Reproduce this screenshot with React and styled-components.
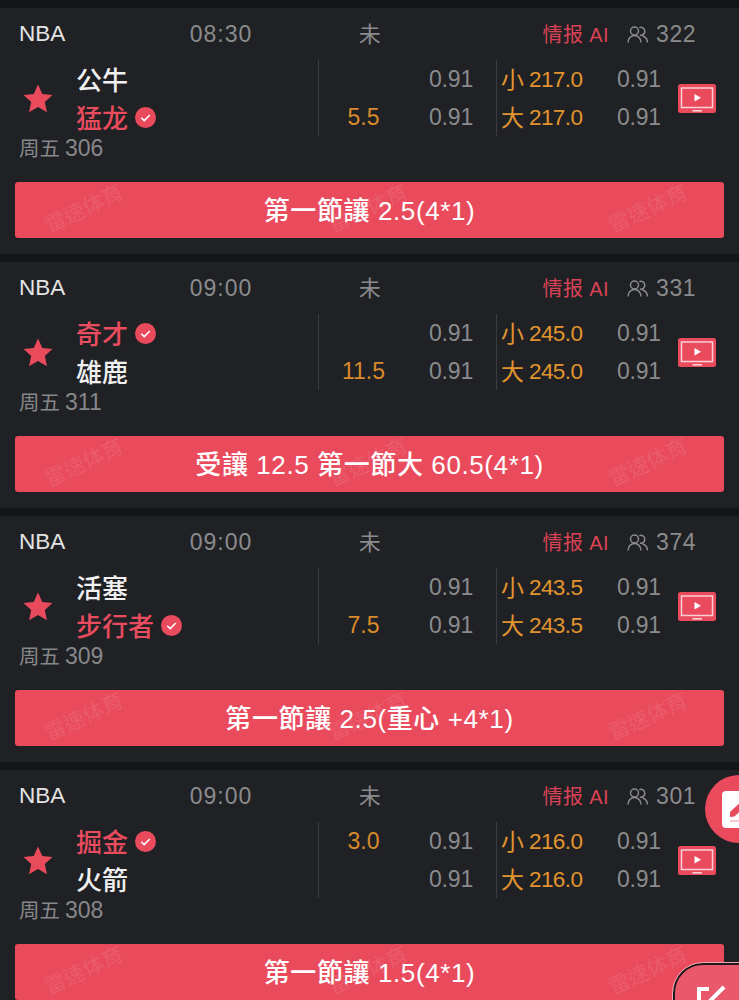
import React from "react";
import styled, { createGlobalStyle } from "styled-components";

const matches = [
  {
    time: "08:30",
    count: 322,
    teams: ["公牛", "猛龙"],
    pick: 1,
    code: "周五 306",
    line: "5.5",
    lineRow: 1,
    total: "217.0",
    tip: "第一節讓 2.5(4*1)",
  },
  {
    time: "09:00",
    count: 331,
    teams: ["奇才", "雄鹿"],
    pick: 0,
    code: "周五 311",
    line: "11.5",
    lineRow: 1,
    total: "245.0",
    tip: "受讓 12.5 第一節大 60.5(4*1)",
  },
  {
    time: "09:00",
    count: 374,
    teams: ["活塞", "步行者"],
    pick: 1,
    code: "周五 309",
    line: "7.5",
    lineRow: 1,
    total: "243.5",
    tip: "第一節讓 2.5(重心 +4*1)",
  },
  {
    time: "09:00",
    count: 301,
    teams: ["掘金", "火箭"],
    pick: 0,
    code: "周五 308",
    line: "3.0",
    lineRow: 0,
    total: "216.0",
    tip: "第一節讓 1.5(4*1)",
  },
];

const GlobalStyle = createGlobalStyle`
  html, body {
    margin: 0;
    padding: 0;
    background: #151618;
    height: 1000px;
    overflow: hidden;
  }
  * {
    box-sizing: border-box;
  }
`;

const Page = styled.div`
  position: relative;
  width: 739px;
  height: 1000px;
  overflow: hidden;
  display: flex;
  flex-direction: column;
  gap: 8px;
  padding-top: 8px;
  background: #151618;
  font-family: "Liberation Sans", "Noto Sans CJK SC", sans-serif;
`;

const Card = styled.section`
  flex: none;
  height: 246px;
  padding: 0 15px;
  background: #202124;
`;

const Header = styled.div`
  display: grid;
  grid-template-columns: 155px 94px 148px 1fr;
  align-items: center;
  height: 52px;
  padding-left: 4px;
  font-size: 23px;
  letter-spacing: 0.6px;
  color: #8a8b8d;
`;

const League = styled.span`
  font-size: 22.5px;
  letter-spacing: 0;
  color: #e4e4e5;
`;

const Time = styled.span`
  text-align: center;
  letter-spacing: 1px;
`;

const Status = styled.span`
  text-align: center;
  padding: 0 0 4px 56px;
  font-size: 22px;
`;

const Meta = styled.div`
  display: flex;
  align-items: center;
  justify-content: flex-end;
  padding-right: 26px;
`;

const Intel = styled.span`
  padding-bottom: 2px;
  margin-right: 18px;
  color: #d94256;
  font-size: 20px;
  letter-spacing: 0.4px;
`;

const Count = styled.span`
  margin-left: 8px;
  min-width: 42px;
`;

const Body = styled.div`
  display: grid;
  grid-template-columns: 57px 242px 90px 65px 23px 121px 61px 38px;
  align-items: stretch;
  height: 76px;
  padding-left: 4px;
`;

const StarCell = styled.div`
  display: flex;
  align-items: center;
  padding-left: 4px;
  padding-top: 1px;
`;

const Teams = styled.div`
  display: grid;
  grid-auto-rows: 38px;
`;

const Team = styled.div`
  display: flex;
  align-items: center;
  gap: 7px;
  padding-bottom: 2px;
  font-size: 26px;
  font-weight: 500;
  color: ${(p) => (p.$picked ? "#e84c5e" : "#f0f0f0")};

  svg {
    margin-top: 2px;
  }
`;

const Stack = styled.div`
  display: grid;
  grid-auto-rows: 38px;
  border-left: ${(p) => (p.$divider ? "1px solid #3b3c3f" : "none")};
`;

const Line = styled.div`
  display: flex;
  align-items: center;
  justify-content: center;
  padding-top: 1px;
  font-size: 23px;
  color: #d98a2b;
`;

const Odd = styled.div`
  display: flex;
  align-items: center;
  justify-content: ${(p) => p.$align || "flex-end"};
  padding-top: 1px;
  font-size: 23px;
  letter-spacing: -0.2px;
  color: #8a8b8d;
`;

const Total = styled.div`
  display: flex;
  align-items: center;
  gap: 5px;
  padding: 1px 0 0 4px;
  font-size: 22.5px;
  letter-spacing: -0.6px;
  color: #e2952f;
`;

const TotalLabel = styled.span`
  padding-bottom: 3px;
  font-size: 23px;
  letter-spacing: 0;
`;

const TvCell = styled.div`
  display: flex;
  align-items: center;
`;

const Code = styled.div`
  height: 24px;
  margin-bottom: 22px;
  padding-left: 4px;
  font-size: 20.5px;
  line-height: 24px;
  color: #86878a;
`;

const Digits = styled.span`
  margin-left: 5px;
  font-size: 23px;
`;

const Tip = styled.div`
  position: relative;
  height: 56px;
  display: flex;
  align-items: center;
  justify-content: center;
  padding-bottom: 3px;
  border-radius: 3px;
  background: #e94b5d;
  color: #fff;
  font-size: 26px;
  font-weight: 500;
  letter-spacing: 0.6px;
  font-family: "Liberation Sans", "Noto Sans CJK TC", sans-serif;
`;

const TipText = styled.span`
  position: relative;
`;

const Watermark = styled.span`
  position: absolute;
  top: 15px;
  left: ${(p) => p.$left}px;
  font-size: 21px;
  line-height: 24px;
  font-weight: 400;
  letter-spacing: 0;
  color: rgba(255, 255, 255, 0.1);
  transform: rotate(-25deg);
  white-space: nowrap;
`;

const RoundFab = styled.div`
  position: absolute;
  left: 705px;
  top: 775px;
  width: 68px;
  height: 68px;
  border-radius: 50%;
  background: #e94b5d;
  padding: 16px 0 0 17px;
`;

const EditFab = styled.div`
  position: absolute;
  left: 673px;
  top: 963px;
  width: 100px;
  height: 70px;
  border-radius: 30px;
  background: #e9596b;
  border: 2px solid #1c1c1f;
  outline: 1.5px solid #f3a5af;
  padding: 20px 0 0 21px;
`;

function Star() {
  return (
    <svg width="30" height="29" viewBox="0 0 30 29">
      <path
        d="M15 0.5l4.3 9.6 10.2 1-7.7 6.9 2.2 10.3L15 23l-9 5.3 2.2-10.3L0.5 11.1l10.2-1z"
        fill="#e94b5d"
      />
    </svg>
  );
}

function Check() {
  return (
    <svg width="21" height="21" viewBox="0 0 21 21">
      <circle cx="10.5" cy="10.5" r="10.5" fill="#e94b5d" />
      <path d="M6.2 10.8l3 2.8 5.6-5.6" fill="none" stroke="#fff" strokeWidth="1.5" />
    </svg>
  );
}

function Users() {
  return (
    <svg width="21" height="17" viewBox="0 0 21 17" fill="none" stroke="#8a8b8d" strokeWidth="1.5">
      <circle cx="7.5" cy="5" r="4" />
      <path d="M1 16.5c0-3.9 2.8-7 6.5-7s6.5 3.1 6.5 7" />
      <path d="M12.3 1.6a4 4 0 1 1 .6 7.6" />
      <path d="M15.5 10c2.8.8 4.8 3.2 5 6.5" />
    </svg>
  );
}

function Tv() {
  return (
    <svg width="38" height="29" viewBox="0 0 38 29">
      <rect width="38" height="29" rx="2.5" fill="#e94b5d" />
      <rect x="3.5" y="4" width="31" height="19.5" fill="none" stroke="#f9d0d5" strokeWidth="1.5" />
      <path d="M16.5 10l6.5 3.8-6.5 3.8z" fill="#fff" />
      <rect x="14.5" y="26" width="9.5" height="1.6" fill="#f9d0d5" />
    </svg>
  );
}

function Match({ time, count, teams, pick, code, line, lineRow, total, tip }) {
  const [day, num] = code.split(" ");
  return (
    <Card>
      <Header>
        <League>NBA</League>
        <Time>{time}</Time>
        <Status>未</Status>
        <Meta>
          <Intel>情报 AI</Intel>
          <Users />
          <Count>{count}</Count>
        </Meta>
      </Header>
      <Body>
        <StarCell>
          <Star />
        </StarCell>
        <Teams>
          {teams.map((name, i) => (
            <Team key={name} $picked={i === pick}>
              {name}
              {i === pick && <Check />}
            </Team>
          ))}
        </Teams>
        <Stack $divider>
          <Line>{lineRow === 0 ? line : ""}</Line>
          <Line>{lineRow === 1 ? line : ""}</Line>
        </Stack>
        <Stack>
          <Odd>0.91</Odd>
          <Odd>0.91</Odd>
        </Stack>
        <div />
        <Stack $divider>
          <Total>
            <TotalLabel>小</TotalLabel>
            {total}
          </Total>
          <Total>
            <TotalLabel>大</TotalLabel>
            {total}
          </Total>
        </Stack>
        <Stack>
          <Odd $align="flex-start">0.91</Odd>
          <Odd $align="flex-start">0.91</Odd>
        </Stack>
        <TvCell>
          <Tv />
        </TvCell>
      </Body>
      <Code>
        {day}
        <Digits>{num}</Digits>
      </Code>
      <Tip>
        <Watermark $left={27}>雷速体育</Watermark>
        <Watermark $left={311}>雷速体育</Watermark>
        <Watermark $left={591}>雷速体育</Watermark>
        <TipText>{tip}</TipText>
      </Tip>
    </Card>
  );
}

export default function App() {
  return (
    <Page>
      <GlobalStyle />
      {matches.map((m) => (
        <Match key={m.code} {...m} />
      ))}
      <RoundFab>
        <svg width="40" height="37" viewBox="0 0 40 37">
          <rect width="40" height="37" rx="4" fill="#fff" />
          <path d="M8 21L18 11.5l4.5 4.5L12.5 25.5 8 26z" fill="#e94b5d" />
          <rect x="8" y="29" width="24" height="2" fill="#f9c9cf" />
        </svg>
      </RoundFab>
      <EditFab>
        <svg width="34" height="30" viewBox="0 0 34 30" fill="none" stroke="#fff" strokeWidth="4">
          <path d="M13 4H3v26" />
          <path d="M6 24L28 2" />
        </svg>
      </EditFab>
    </Page>
  );
}
